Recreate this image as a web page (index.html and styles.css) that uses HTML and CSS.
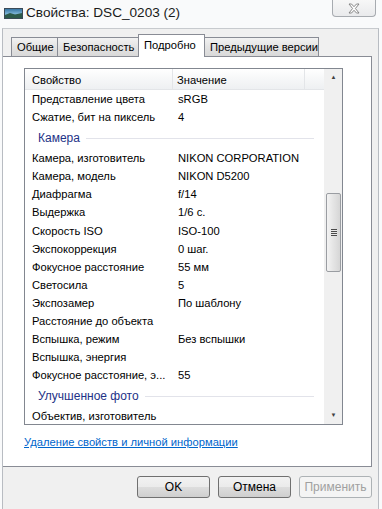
FILE: index.html
```html
<!DOCTYPE html>
<html lang="ru">
<head>
    <meta charset="UTF-8">
    <title>Свойства: DSC_0203 (2)</title>
    <link rel="stylesheet" href="styles.css">
</head>
<body>
    <div id="window">
        <div class="titlebar">
            <svg class="appIcon" width="19" height="11" viewBox="0 0 19 11">
                <defs>
                    <linearGradient id="sky" x1="0" y1="0" x2="0" y2="1">
                        <stop offset="0" stop-color="#2f6f9e"/>
                        <stop offset="0.55" stop-color="#7fb6d8"/>
                        <stop offset="1" stop-color="#2a5f6e"/>
                    </linearGradient>
                </defs>
                <rect x="0.5" y="0.5" width="18" height="10" fill="url(#sky)" stroke="#3b4a57"/>
                <path d="M1 7 L6 5 L11 6.5 L18 5 L18 10 L1 10 Z" fill="#2d5a4a"/>
            </svg>
            <span class="titleText">Свойства: DSC_0203 (2)</span>
            <div class="closeBtn">
                <svg width="12" height="11" viewBox="0 0 12 11">
                    <path d="M1 1 L3.5 1 L6 3.7 L8.5 1 L11 1 L7.4 5.5 L11 10 L8.5 10 L6 7.3 L3.5 10 L1 10 L4.6 5.5 Z" fill="#fff" stroke="#7a7a7a" stroke-width="0.9" stroke-linejoin="round"/>
                </svg>
            </div>
        </div>

        <div class="client">
            <div class="tabs">
                <div class="tab">Общие</div>
                <div class="tab">Безопасность</div>
                <div class="tab selected">Подробно</div>
                <div class="tab">Предыдущие версии</div>
            </div>

            <div class="panel">
                <div class="listBox">
                    <div class="listArea">
                        <div class="header">
                            <div class="hcol name">Свойство</div>
                            <div class="hcol value">Значение</div>
                            <div class="hcol rest"></div>
                        </div>
                        <div class="row"><span class="name">Представление цвета</span><span class="value">sRGB</span></div>
                        <div class="row"><span class="name">Сжатие, бит на пиксель</span><span class="value">4</span></div>
                        <div class="group"><span>Камера</span><i></i></div>
                        <div class="row"><span class="name">Камера, изготовитель</span><span class="value">NIKON CORPORATION</span></div>
                        <div class="row"><span class="name">Камера, модель</span><span class="value">NIKON D5200</span></div>
                        <div class="row"><span class="name">Диафрагма</span><span class="value">f/14</span></div>
                        <div class="row"><span class="name">Выдержка</span><span class="value">1/6 с.</span></div>
                        <div class="row"><span class="name">Скорость ISO</span><span class="value">ISO-100</span></div>
                        <div class="row"><span class="name">Экспокоррекция</span><span class="value">0 шаг.</span></div>
                        <div class="row"><span class="name">Фокусное расстояние</span><span class="value">55 мм</span></div>
                        <div class="row"><span class="name">Светосила</span><span class="value">5</span></div>
                        <div class="row"><span class="name">Экспозамер</span><span class="value">По шаблону</span></div>
                        <div class="row"><span class="name">Расстояние до объекта</span><span class="value"></span></div>
                        <div class="row"><span class="name">Вспышка, режим</span><span class="value">Без вспышки</span></div>
                        <div class="row"><span class="name">Вспышка, энергия</span><span class="value"></span></div>
                        <div class="row"><span class="name">Фокусное расстояние, э...</span><span class="value">55</span></div>
                        <div class="group"><span>Улучшенное фото</span><i></i></div>
                        <div class="row"><span class="name">Объектив, изготовитель</span><span class="value"></span></div>
                    </div>
                    <div class="scrollbar">
                        <div class="arrow">&#9650;</div>
                        <div class="track">
                            <div class="thumb"><div class="grip"></div></div>
                        </div>
                        <div class="arrow">&#9660;</div>
                    </div>
                </div>
                <a href="#" class="removeLink">Удаление свойств и личной информации</a>
            </div>

            <div class="buttons">
                <button class="btn">OK</button>
                <button class="btn">Отмена</button>
                <button class="btn" disabled>Применить</button>
            </div>
        </div>
    </div>
</body>
</html>
```

FILE: styles.css
```css
body {
    margin: 0;
    font-family: "Segoe UI", "Liberation Sans", Arial, sans-serif;
    font-size: 11.2px;
    color: #000;
}

#window {
    width: 382px;
    height: 509px;
    background-color: #f9fafb;
    overflow: hidden;
}

.titlebar {
    height: 28px;
    display: flex;
    align-items: flex-start;
}

.appIcon {
    margin: 8px 0 0 4px;
}

.titleText {
    margin: 5px 0 0 3px;
    font-size: 13.6px;
    color: #1a1a1a;
}

.closeBtn {
    margin-left: auto;
    margin-right: 6px;
    width: 42px;
    height: 16px;
    border: 1px solid #a7abb0;
    border-top: none;
    border-radius: 0 0 4px 4px;
    background: linear-gradient(#f7f7f7, #e9eaec);
    display: flex;
    justify-content: center;
    align-items: center;
}

.client {
    margin-left: 2px;
    width: 375px;
    height: 481px;
    border-left: 1px solid #b8bcc2;
    border-top: 1px solid #c7cace;
    border-right: 1px solid #b8bcc2;
    background-color: #f0f0f0;
}

.tabs {
    display: flex;
    align-items: flex-end;
    height: 27px;
    padding-left: 8px;
}

.tab {
    height: 18px;
    line-height: 18px;
    padding: 0 5px;
    margin-right: -1px;
    border: 1px solid #898c95;
    border-bottom: none;
    background: linear-gradient(#f2f2f2, #e3e3e3 50%, #d9d9d9);
    white-space: nowrap;
}

.tab:nth-child(1) { width: 35px; }
.tab:nth-child(2) { width: 71px; }
.tab:nth-child(4) { width: 103px; }

.tab.selected {
    width: 55px;
    height: 22px;
    line-height: 20px;
    margin: 0 -1px 0 -1px;
    background: #fff;
    position: relative;
    top: 1px;
    z-index: 1;
}

.panel {
    width: 347px;
    height: 398px;
    margin-left: 0;
    border: 1px solid #898c95;
    border-left: none;
    background: #fff;
    padding: 11px 0 0 21px;
}

.listBox {
    width: 317px;
    height: 355px;
    border: 1px solid #828790;
    display: flex;
}

.listArea {
    width: 299px;
    overflow: hidden;
}

.header {
    display: flex;
    height: 17px;
    padding-top: 3px;
    line-height: 17px;
    background: linear-gradient(#ffffff, #f6f7f8 50%, #eef0f2);
    border-bottom: 1px solid #e3e5e8;
}

.hcol {
    border-right: 1px solid #e3e5e8;
    white-space: nowrap;
    margin-top: -3px;
    padding-top: 3px;
}

.hcol.name {
    width: 140px;
    padding-left: 7px;
}

.hcol.value {
    width: 127px;
    padding-left: 4px;
}

.hcol.rest {
    flex: 1;
    border-right: none;
}

.row {
    display: flex;
    height: 18.1px;
    line-height: 18px;
    white-space: nowrap;
}

.row .name {
    width: 141px;
    padding-left: 7px;
}

.row .value {
    padding-left: 5px;
}

.group {
    display: flex;
    align-items: center;
    height: 23px;
    padding-left: 13px;
    color: #1e3287;
    font-size: 12px;
}

.group i {
    flex: 1;
    height: 1px;
    margin: 1px 10px 0 6px;
    background: #e2e3ea;
}

.scrollbar {
    width: 17px;
    display: flex;
    flex-direction: column;
    background: #f0f0f0;
    border-left: 1px solid #f0f0f0;
}

.arrow {
    height: 17px;
    font-size: 6px;
    line-height: 17px;
    text-align: center;
    color: #404040;
}

.track {
    flex: 1;
    padding-top: 107px;
}

.thumb {
    margin: 0 1px;
    height: 77px;
    border: 1px solid #9a9da2;
    border-radius: 2px;
    background: linear-gradient(to right, #f3f3f3, #e4e4e4 50%, #d6d6d6);
    display: flex;
    justify-content: center;
    align-items: center;
}

.grip {
    width: 6px;
    height: 7px;
    background: repeating-linear-gradient(#4a4a4a 0 1px, #e8e8e8 1px 2px);
}

.removeLink {
    display: inline-block;
    margin-top: 11px;
    color: #0066cc;
    text-decoration: underline;
}

.buttons {
    display: flex;
    justify-content: flex-end;
    gap: 8px;
    padding: 9px 6px 0 0;
}

.btn {
    width: 73px;
    height: 22px;
    font-family: inherit;
    font-size: 12px;
    color: #000;
    border: 1px solid #707070;
    border-radius: 3px;
    background: linear-gradient(#f2f2f2, #ebebeb 50%, #dddddd 51%, #cfcfcf);
    padding: 0;
}

.btn:disabled {
    color: #a0a0a0;
    border-color: #adb2b5;
    background: #f4f4f4;
}
```
